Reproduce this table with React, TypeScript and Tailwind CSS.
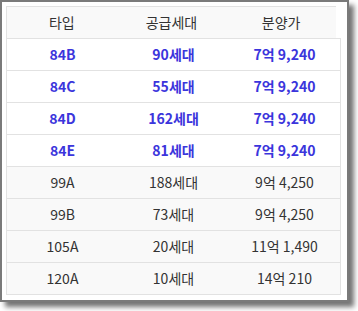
import React from 'react'

type Row = {
  type: string
  units: string
  price: string
  hot: boolean
}

const rows: Row[] = [
  { type: '84B', units: '90세대', price: '7억 9,240', hot: true },
  { type: '84C', units: '55세대', price: '7억 9,240', hot: true },
  { type: '84D', units: '162세대', price: '7억 9,240', hot: true },
  { type: '84E', units: '81세대', price: '7억 9,240', hot: true },
  { type: '99A', units: '188세대', price: '9억 4,250', hot: false },
  { type: '99B', units: '73세대', price: '9억 4,250', hot: false },
  { type: '105A', units: '20세대', price: '11억 1,490', hot: false },
  { type: '120A', units: '10세대', price: '14억 210', hot: false },
]

const App = () => {
  return (
    <div className="w-[358px] h-[311px] bg-white font-['Noto_Sans_CJK_KR','Noto_Sans',sans-serif]">
      <div className="w-[349px] h-[302px] border-2 border-[#7a7a7a] bg-white shadow-[5px_5px_5px_rgba(0,0,0,0.55)] px-1 pt-1">
        {/* header */}
        <div className="grid grid-cols-3 w-[330px] h-8 border-t border-l border-[#e2e2e2] bg-[#f9f9f9] text-[14px] text-[#333]">
          <div className="flex items-center justify-center">타입</div>
          <div className="flex items-center justify-center">공급세대</div>
          <div className="flex items-center justify-center">분양가</div>
        </div>

        {/* body */}
        <div className="w-[335px] border border-[#e2e2e2]">
          {rows.map((r, i) => (
            <div
              key={r.type}
              className={`grid grid-cols-3 h-8 text-[14px] ${
                i < rows.length - 1 ? 'border-b border-[#e2e2e2]' : 'h-[31px]'
              } ${
                r.hot
                  ? 'bg-white text-[#3b35dc] font-bold'
                  : 'bg-[#f9f9f9] text-[#333]'
              }`}
            >
              <div className="flex items-center justify-center">{r.type}</div>
              <div className="flex items-center justify-center">{r.units}</div>
              <div className="flex items-center justify-center">{r.price}</div>
            </div>
          ))}
        </div>
      </div>
    </div>
  )
}

export default App
